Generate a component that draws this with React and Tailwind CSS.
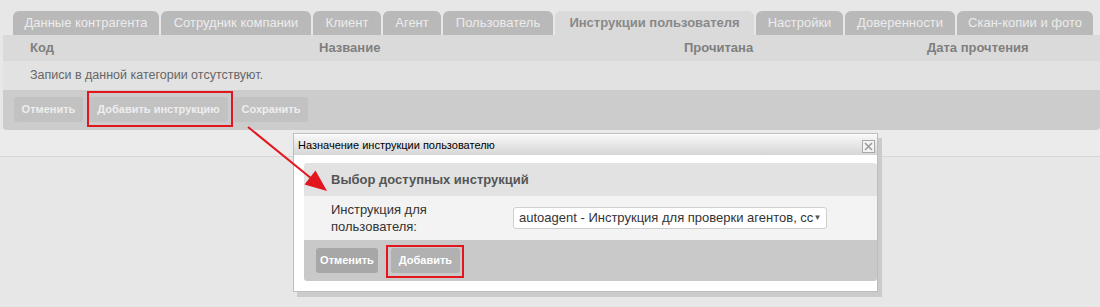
import React from 'react';

const tabs = [
    { label: 'Данные контрагента', w: 'w-[146px]' },
    { label: 'Сотрудник компании', w: 'w-[150px]' },
    { label: 'Клиент', w: 'w-[68px]' },
    { label: 'Агент', w: 'w-[58px]' },
    { label: 'Пользователь', w: 'w-[110px]' },
    { label: 'Инструкции пользователя', w: 'w-[199px]', active: true },
    { label: 'Настройки', w: 'w-[87px]' },
    { label: 'Доверенности', w: 'w-[110px]' },
    { label: 'Скан-копии и фото', w: 'w-[136px]' },
];

const App = () => {
    return (
        <div className="relative w-[1100px] h-[307px] overflow-hidden bg-[#e7e7e7] font-['Liberation_Sans',Arial,sans-serif]">
            {/* Tabs */}
            <div className="flex gap-[2px] pl-[13px] pt-[11px]">
                {tabs.map((tab) => (
                    <div
                        key={tab.label}
                        className={`${tab.w} h-[24px] flex items-center justify-center rounded-t-[6px] text-[13px] whitespace-nowrap ${tab.active
                            ? 'bg-[#dadada] text-[#898989] font-bold'
                            : 'bg-[#b9b9b9] text-[#ececec]'
                            }`}
                    >
                        {tab.label}
                    </div>
                ))}
            </div>

            {/* Panel */}
            <div className="ml-[3px] rounded-b-[4px] overflow-hidden">
                <div className="grid grid-cols-[289px_365px_243px_1fr] h-[26px] items-center pl-[27px] bg-[#dadada] text-[13px] font-bold text-[#7f7f7f]">
                    <span>Код</span>
                    <span>Название</span>
                    <span>Прочитана</span>
                    <span>Дата прочтения</span>
                </div>
                <div className="h-[29px] flex items-center pl-[27px] bg-[#e2e2e2] text-[12.5px] text-[#666]">
                    Записи в данной категории отсутствуют.
                </div>
                <div className="h-[40px] flex items-start gap-[6px] pl-[11px] pt-[7px] bg-[#cccccc]">
                    <button className="h-[25px] w-[69px] rounded-[3px] bg-[#c2c2c2] text-[#eeeeee] text-[11px] font-bold">Отменить</button>
                    <button className="h-[25px] w-[139px] rounded-[3px] bg-[#c2c2c2] text-[#eeeeee] text-[11px] font-bold">Добавить инструкцию</button>
                    <button className="h-[25px] w-[74px] rounded-[3px] bg-[#c2c2c2] text-[#eeeeee] text-[11px] font-bold">Сохранить</button>
                </div>
            </div>
            <div className="h-[27px] bg-[#ebebeb] border-b border-[#d7d7d7]" />

            {/* Dialog */}
            <div className="absolute left-[293px] top-[133px] w-[585px] h-[159px] bg-white border border-[#bdbdbd] shadow-[4px_5px_0_#cbcbcb] flex flex-col">
                <div className="h-[21px] flex items-center justify-between pl-[4px] pr-[2px] bg-gradient-to-b from-[#f7f7f7] to-[#d6d6d6] border-t border-[#ffffff]">
                    <span className="text-[11px] text-black">Назначение инструкции пользователю</span>
                    <svg width="13" height="13" viewBox="0 0 13 13" className="mt-[2px]">
                        <rect x="0.5" y="0.5" width="12" height="12" fill="#f4f4f4" stroke="#a9a9a9" />
                        <path d="M3 3 L10 10 M10 3 L3 10" stroke="#9a9a9a" strokeWidth="1.5" />
                    </svg>
                </div>
                <div className="ml-[10px] mt-[8px] rounded-[3px] overflow-hidden">
                    <div className="h-[33px] flex items-center pl-[27px] bg-[#e2e2e2] text-[13px] font-bold text-[#555555]">
                        Выбор доступных инструкций
                    </div>
                    <div className="h-[44px] flex items-center pl-[27px] bg-[#f3f3f3]">
                        <div className="w-[182px] text-[13px] leading-[17px] text-[#333333]">
                            Инструкция для<br />пользователя:
                        </div>
                        <div className="w-[314px] h-[22px] flex items-center justify-between pl-[5px] pr-[5px] bg-white border border-[#cfcfcf] rounded-[3px]">
                            <span className="text-[13px] text-[#333333] whitespace-nowrap">
                                autoagent - Инструкция для проверки агентов, сс
                            </span>
                            <span className="text-[8px] text-[#555555]">▼</span>
                        </div>
                    </div>
                    <div className="h-[41px] flex items-start gap-[13px] pl-[12px] pt-[8px] bg-[#c9c9c9]">
                        <button className="h-[25px] w-[62px] rounded-[3px] bg-[#a7a7a7] text-white text-[11px] font-bold">Отменить</button>
                        <button className="h-[25px] w-[69px] rounded-[3px] bg-[#b1b1b1] text-white text-[11px] font-bold">Добавить</button>
                    </div>
                </div>
            </div>

            {/* Annotations */}
            <svg className="absolute left-0 top-0 pointer-events-none" width="1100" height="307">
                <rect x="88" y="92" width="144" height="34" fill="none" stroke="#e3161f" strokeWidth="2" />
                <rect x="387" y="246" width="76" height="31" fill="none" stroke="#e3161f" strokeWidth="2" />
                <line x1="248" y1="127" x2="312" y2="179" stroke="#e3161f" strokeWidth="2" />
                <polygon points="327,191 304.5,184.5 315.5,170.5" fill="#e3161f" />
            </svg>
        </div>
    );
};

export default App;
